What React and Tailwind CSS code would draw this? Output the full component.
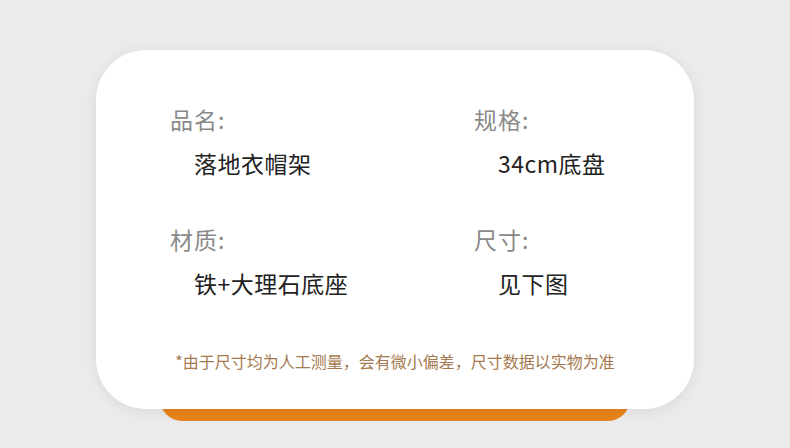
import React from "react";

const specs = [
  { label: "品名:", value: "落地衣帽架" },
  { label: "规格:", value: "34cm底盘" },
  { label: "材质:", value: "铁+大理石底座" },
  { label: "尺寸:", value: "见下图" },
];

const App = () => {
  return (
    <div
      className="w-[790px] h-[448px] bg-[#ebebeb] overflow-hidden flex flex-col items-center pt-[50px]"
      style={{ fontFamily: "'Noto Sans CJK SC', 'Noto Sans', sans-serif" }}
    >
      <div className="relative z-10 w-[598px] h-[359px] bg-white rounded-[50px] shadow-[0_2px_14px_rgba(0,0,0,0.08)] pt-[54px] pl-[74px] flex flex-col">
        <div className="grid grid-cols-[304px_1fr] gap-y-[46px]">
          {specs.map((s) => (
            <div key={s.label} className="flex flex-col gap-[14px]">
              <div className="text-[23px] leading-[30px] text-[#8a8a8a] tracking-[1px]">{s.label}</div>
              <div className="pl-[24px] text-[23px] leading-[30px] text-[#222] tracking-[0.5px]">{s.value}</div>
            </div>
          ))}
        </div>
        <div className="mt-[52px] -ml-[74px] text-center text-[16px] leading-[22px] text-[#a5794f]">
          *由于尺寸均为人工测量，会有微小偏差，尺寸数据以实物为准
        </div>
      </div>
      <div className="w-[470px] h-[42px] -mt-[30px] bg-[#e8841a] rounded-b-[22px]" />
    </div>
  );
};

export default App;
